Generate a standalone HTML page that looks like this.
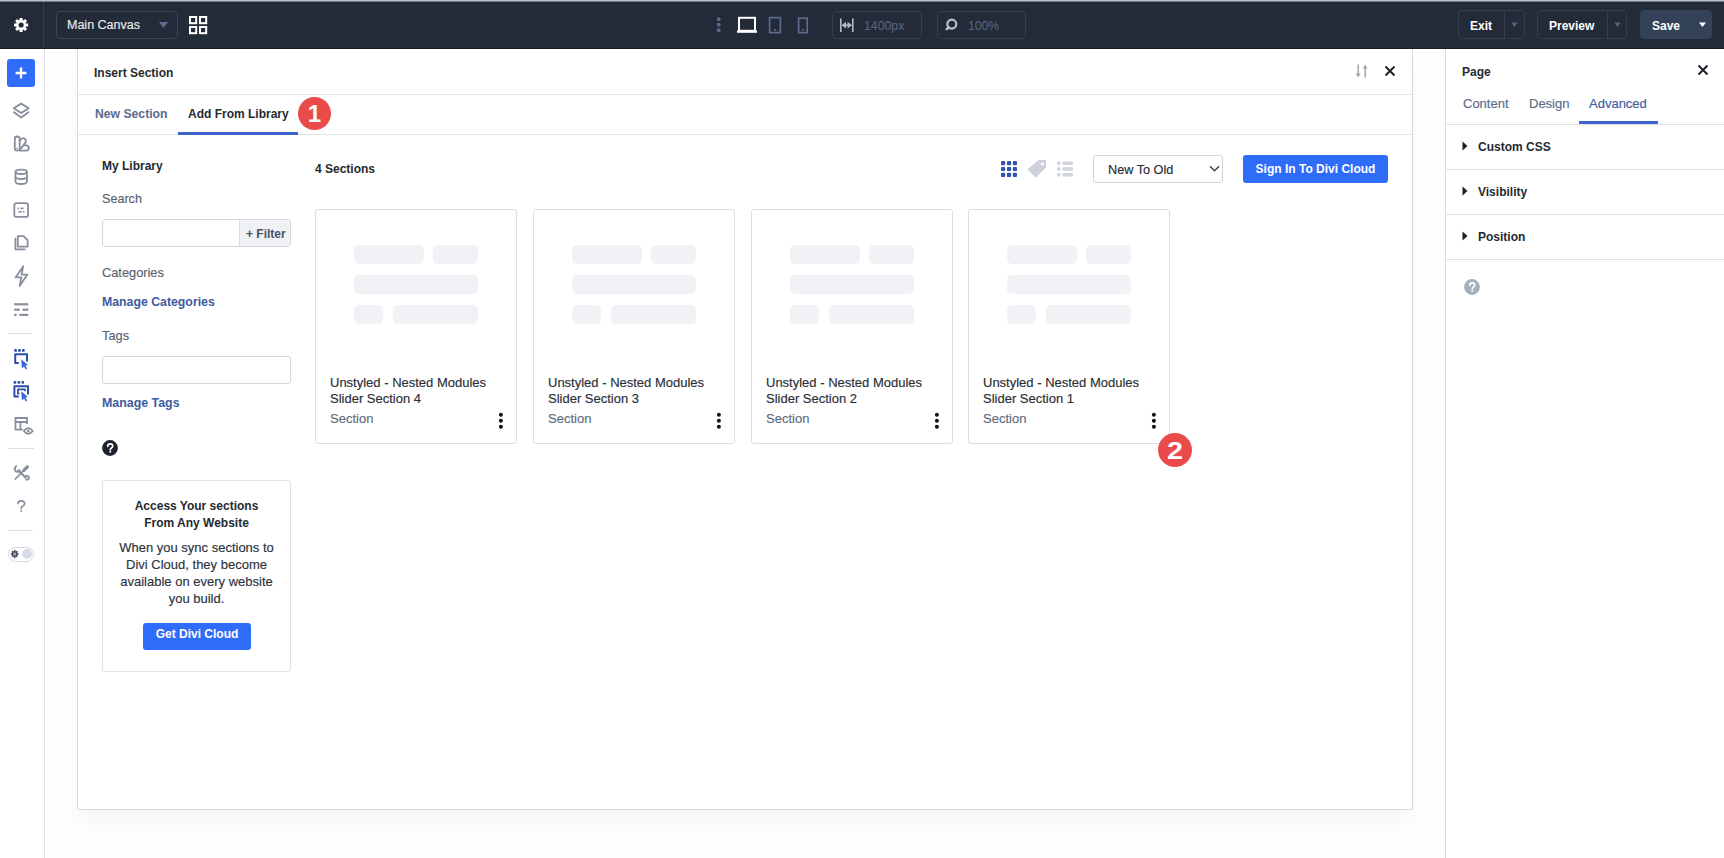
<!DOCTYPE html>
<html><head><meta charset="utf-8">
<style>
*{box-sizing:border-box;margin:0;padding:0}
html,body{width:1724px;height:858px;overflow:hidden;background:#fdfdfe;font-family:"Liberation Sans",sans-serif;color:#1f2937}
.a{position:absolute}
.t{position:absolute;white-space:nowrap;line-height:1}
svg{position:absolute;overflow:visible}
#top{left:0;top:0;width:1724px;height:49px;background:#232a38;border-top:1px solid #b8c1cb;box-shadow:inset 0 1px 0 #6f7885}
.box{position:absolute;border:1px solid #3a4557;border-radius:4px}
.b{font-weight:bold}
.m{-webkit-text-stroke:0.15px currentColor}
</style></head><body>
<!-- TOP BAR -->
<div id="top" class="a"></div>
<div class="a" style="left:43px;top:2px;width:1px;height:46px;background:#343e4c"></div>
<div class="a" style="left:0;top:48px;width:1724px;height:1px;background:#171c25"></div>
<!-- gear -->
<svg style="left:0;top:0" width="44" height="49" viewBox="0 0 44 49">
 <g transform="translate(21.1,25)">
  <path fill="#fff" d="M-1.62,-4.73 L-1.43,-7.06 L1.43,-7.06 L1.62,-4.73 L2.20,-4.49 L3.98,-6.00 L6.00,-3.98 L4.49,-2.20 L4.73,-1.62 L7.06,-1.43 L7.06,1.43 L4.73,1.62 L4.49,2.20 L6.00,3.98 L3.98,6.00 L2.20,4.49 L1.62,4.73 L1.43,7.06 L-1.43,7.06 L-1.62,4.73 L-2.20,4.49 L-3.98,6.00 L-6.00,3.98 L-4.49,2.20 L-4.73,1.62 L-7.06,1.43 L-7.06,-1.43 L-4.73,-1.62 L-4.49,-2.20 L-6.00,-3.98 L-3.98,-6.00 L-2.20,-4.49Z"/>
  <circle r="2.6" fill="#232a38"/>
 </g>
</svg>
<div class="box" style="left:56px;top:11px;width:122px;height:28px"></div>
<div class="t m" style="left:67px;top:19px;font-size:12.5px;color:#e8ebf0">Main Canvas</div>
<svg style="left:159px;top:22px" width="9" height="6"><path d="M0,0 L9,0 L4.5,6 Z" fill="#5d6b8d"/></svg>
<svg style="left:189px;top:16px" width="19" height="19"><g fill="none" stroke="#fff" stroke-width="2"><rect x="1" y="1" width="6.2" height="6.2"/><rect x="11" y="1" width="6.2" height="6.2"/><rect x="1" y="11" width="6.2" height="6.2"/><rect x="11" y="11" width="6.2" height="6.2"/></g></svg>

<!-- center toolbar -->
<svg style="left:714px;top:16px" width="10" height="18"><g fill="#5d6b8d"><circle cx="4.7" cy="3.2" r="1.9"/><circle cx="4.7" cy="8.7" r="1.9"/><circle cx="4.7" cy="14.2" r="1.9"/></g></svg>
<svg style="left:736px;top:16px" width="22" height="18"><g fill="none" stroke="#fff" stroke-width="2"><rect x="3" y="1.8" width="16" height="13"/></g><rect x="1" y="14.5" width="20" height="2.3" fill="#fff"/></svg>
<svg style="left:768px;top:16px" width="14" height="18"><rect x="1.6" y="1.6" width="10.8" height="15" fill="none" stroke="#5d6b8d" stroke-width="1.7"/><rect x="6" y="13" width="2" height="1.6" fill="#5d6b8d"/></svg>
<svg style="left:797px;top:16px" width="12" height="18"><rect x="1.6" y="2.2" width="8.6" height="14.4" fill="none" stroke="#5d6b8d" stroke-width="1.7"/><rect x="5" y="13" width="1.8" height="1.6" fill="#5d6b8d"/></svg>
<div class="box" style="left:832px;top:11px;width:90px;height:28px;border-color:#333e4f"></div>
<svg style="left:839px;top:17px" width="16" height="16"><g fill="#b3bbca"><rect x="1" y="1.4" width="1.6" height="13.6"/><rect x="13" y="1.4" width="1.6" height="13.6"/><path d="M2.6,8.2 L7,4.8 L7,11.6 Z M13,8.2 L8.6,4.8 L8.6,11.6 Z"/><rect x="6" y="7.4" width="3.6" height="1.6"/></g></svg>
<div class="t m" style="left:864px;top:20px;font-size:12.3px;color:#56637f">1400px</div>
<div class="box" style="left:937px;top:11px;width:89px;height:28px;border-color:#333e4f"></div>
<svg style="left:944px;top:17px" width="16" height="16"><circle cx="7.8" cy="7.1" r="4.5" fill="none" stroke="#b9c0d0" stroke-width="2.2"/><path d="M4.6,10.4 L2.8,12.2" stroke="#b9c0d0" stroke-width="2.6" stroke-linecap="round"/></svg>
<div class="t m" style="left:968px;top:20px;font-size:12.2px;color:#56637f">100%</div>

<!-- right buttons -->
<div class="box" style="left:1458px;top:10px;width:67px;height:29px;border-color:#333e4f"></div>
<div class="a" style="left:1504px;top:10px;width:1px;height:29px;background:#333e4f"></div>
<div class="t b" style="left:1470px;top:20px;font-size:12px;color:#fff">Exit</div>
<svg style="left:1510px;top:22px" width="9" height="6"><path d="M1.2,0.6 L7.8,0.6 L4.5,4.9 Z" fill="#56627c"/></svg>
<div class="box" style="left:1537px;top:10px;width:90px;height:29px;border-color:#333e4f"></div>
<div class="a" style="left:1607px;top:10px;width:1px;height:29px;background:#333e4f"></div>
<div class="t b" style="left:1549px;top:20px;font-size:12px;color:#fff">Preview</div>
<svg style="left:1613px;top:22px" width="9" height="6"><path d="M1.2,0.6 L7.8,0.6 L4.5,4.9 Z" fill="#56627c"/></svg>
<div class="a" style="left:1640px;top:10px;width:72px;height:29px;background:#334257;border-radius:4px"></div>
<div class="t b" style="left:1652px;top:20px;font-size:12px;color:#fff">Save</div>
<svg style="left:1698px;top:22px" width="9" height="6"><path d="M1,0.4 L8,0.4 L4.5,5 Z" fill="#fff"/></svg>

<!-- LEFT SIDEBAR -->
<div class="a" style="left:0;top:49px;width:45px;height:809px;background:#fff;border-right:1px solid #dddee3"></div>


<!-- sidebar icons -->
<div class="a" style="left:7px;top:59px;width:28px;height:28px;border-radius:3px;background:#306cfa"></div>
<svg style="left:7px;top:59px" width="28" height="28"><path d="M14,8.6 V19.4 M8.6,14 H19.4" stroke="#fff" stroke-width="2.4"/></svg>
<svg style="left:0;top:95px" width="44" height="240" viewBox="0 95 44 240"><g fill="none" stroke="#898e9f" stroke-width="1.8" stroke-linejoin="round" stroke-linecap="round">
 <path d="M21.2,103.6 L28.6,108.3 L21.2,113 L13.8,108.3 Z" stroke-width="1.9"/>
 <path d="M14,112.2 L21.2,117.6 L28.4,112.2" stroke-width="1.9"/>
 <!-- palette -->
 <rect x="14.8" y="136.5" width="4.9" height="14.2" rx="2.4"/>
 <path d="M19.7,140.8 Q22,137.6 24,138.2 Q26.6,139.4 25.6,142.4 L20.2,149.6"/>
 <path d="M20,150.7 H26.4 Q28.8,150.7 28.8,148.1 Q28.8,145.4 26.2,145.4 H24.4"/>
 <!-- database -->
 <ellipse cx="21.2" cy="171.8" rx="5.7" ry="2.2"/>
 <path d="M15.5,171.8 V181.8 Q15.5,184 21.2,184 Q26.9,184 26.9,181.8 V171.8"/>
 <path d="M15.5,176.8 Q15.5,179 21.2,179 Q26.9,179 26.9,176.8"/>
 <!-- form -->
 <rect x="14.3" y="203.1" width="13.8" height="13.8" rx="2.2"/>
 <!-- pages -->
 <path d="M17.8,246.6 V236.2 H23.6 L27.6,240.2 V246.6 Z"/>
 <path d="M15.4,238.6 V249.4 H24.8"/>
 <!-- lightning -->
 <path d="M23.2,266.2 L15.6,277.4 H21.4 L19.6,286 L27.4,274.6 H21.6 Z"/>
</g>
<g fill="#898e9f">
 <circle cx="17" cy="148.2" r="0.8"/>
 <rect x="17.6" y="207.6" width="1.4" height="1.6"/><rect x="20.4" y="207.6" width="3.2" height="1.6"/>
 <rect x="18.4" y="211" width="3.2" height="1.6"/><rect x="23" y="211" width="1.4" height="1.6"/>
 <rect x="14.2" y="303.2" width="14.1" height="2.2"/>
 <rect x="14.2" y="308.6" width="5.6" height="2.2"/><rect x="22.6" y="308.6" width="5.7" height="2.2"/>
 <rect x="14.2" y="313.8" width="2.4" height="2.2"/><rect x="19.4" y="313.8" width="8.9" height="2.2"/>
</g></svg>
<div class="a" style="left:8px;top:333px;width:24px;height:1px;background:#dddee3"></div>
<svg style="left:0;top:340px" width="44" height="100" viewBox="0 340 44 100">
 <g fill="#2c4ea6">
  <rect x="14.2" y="349.1" width="2.7" height="2.7" rx="0.9"/><rect x="18.1" y="349.1" width="2.7" height="2.7" rx="0.9"/><rect x="22" y="349.1" width="2.7" height="2.7" rx="0.9"/>
  <rect x="13.6" y="381" width="2.7" height="2.7" rx="0.9"/><rect x="17.5" y="381" width="2.7" height="2.7" rx="0.9"/><rect x="21.4" y="381" width="2.7" height="2.7" rx="0.9"/>
 </g>
 <g fill="none" stroke="#2c4ea6" stroke-width="2" stroke-linejoin="round">
  <path d="M18.8,363.1 H15.2 V354.2 H27 V361.6"/>
  <path d="M18.8,396.6 H14.4 V386.3 H28 V394.4"/>
  <path d="M19.4,393.6 H17.9 V389.4 H25 V391.2" stroke-width="1.7"/>
 </g>
 <g fill="#3563e3">
  <path d="M21.2,359.2 L28,365 L25.4,365.6 L27.2,368.6 L25.8,369.4 L24,366.4 L22,368.4 Z"/>
  <path d="M21.2,391.2 L28,397 L25.4,397.6 L27.2,400.6 L25.8,401.4 L24,398.4 L22,400.4 Z"/>
 </g>
 <g fill="none" stroke="#898e9f" stroke-width="1.8">
  <path d="M27,424 V418 H15.5 V429.6 H23"/>
  <path d="M15.5,422 H27 M20.4,422 V429.6"/>
 </g>
 <path d="M22.9,431 Q28.3,423.6 33.7,431 Q28.3,438.4 22.9,431 Z" fill="#fff" stroke="#fff" stroke-width="1.5"/>
 <path d="M23.8,431 Q28.3,425.4 32.8,431 Q28.3,436.6 23.8,431 Z" fill="none" stroke="#898e9f" stroke-width="1.8" stroke-linejoin="round"/>
 <circle cx="28.3" cy="431" r="1.4" fill="#898e9f"/>
</svg>
<div class="a" style="left:8px;top:448px;width:26px;height:1px;background:#dddee3"></div>
<svg style="left:0;top:460px" width="44" height="60" viewBox="0 460 44 60">
 <g stroke="#898e9f" fill="none" stroke-linecap="round">
  <path d="M15.2,479 L23.6,470.6" stroke-width="1.7"/>
  <path d="M23.8,470.4 L27.4,466.8" stroke-width="3.2"/>
  <path d="M18.2,470.2 L25.8,477.8" stroke-width="2"/>
  <path d="M16.2,466.2 Q13.6,468.6 15.6,471.2 Q18.2,472.6 19.8,470.4" stroke-width="1.8"/>
  <path d="M25,476.8 Q27.6,474.8 29,477.4 Q29,480 26.4,479.6" stroke-width="1.8"/>
 </g>
 <path d="M18,503.6 Q18,500.9 21.2,500.9 Q24.6,500.9 24.6,503.6 Q24.6,505.3 22.6,506.2 Q21.2,506.9 21.2,508.4" fill="none" stroke="#898e9f" stroke-width="1.7" stroke-linecap="round"/>
 <circle cx="21.2" cy="511" r="1" fill="#898e9f"/>
</svg>
<div class="a" style="left:8px;top:530px;width:25px;height:1px;background:#dddee3"></div>
<div class="a" style="left:7.5px;top:546.5px;width:26px;height:15px;border:1px solid #d6d8de;border-radius:8px;background:#fff"></div>
<div class="a" style="left:22px;top:549px;width:10px;height:10px;border-radius:50%;background:#d9dce7"></div>
<svg style="left:9px;top:548px" width="12" height="12"><g transform="translate(5.7,6)" fill="#474e62"><path d="M-0.9,-2.6 L-0.8,-3.9 L0.8,-3.9 L0.9,-2.6 L1.2,-2.5 L2.2,-3.3 L3.3,-2.2 L2.5,-1.2 L2.6,-0.9 L3.9,-0.8 L3.9,0.8 L2.6,0.9 L2.5,1.2 L3.3,2.2 L2.2,3.3 L1.2,2.5 L0.9,2.6 L0.8,3.9 L-0.8,3.9 L-0.9,2.6 L-1.2,2.5 L-2.2,3.3 L-3.3,2.2 L-2.5,1.2 L-2.6,0.9 L-3.9,0.8 L-3.9,-0.8 L-2.6,-0.9 L-2.5,-1.2 L-3.3,-2.2 L-2.2,-3.3 L-1.2,-2.5Z"/><circle r="1.5" fill="#a3aac0"/></g></svg>

<!-- MODAL -->
<div class="a" style="left:77px;top:49px;width:1336px;height:761px;background:#fff;border:1px solid #d9dadf;border-top:none;border-radius:0 0 3px 3px;box-shadow:0 14px 18px -6px rgba(30,40,60,0.045)"></div>

<!-- RIGHT PANEL -->
<div class="a" style="left:1445px;top:49px;width:279px;height:809px;background:#fff;border-left:1px solid #dadbe0"></div>


<!-- modal header -->
<div class="t b" style="left:94px;top:67px;font-size:12px;color:#252a31">Insert Section</div>
<svg style="left:1355px;top:64px" width="14" height="14"><g stroke="#a2a6b0" stroke-width="1.5" fill="none"><path d="M3.2,0.5 V12.5"/><path d="M10.2,13.5 V1.5"/></g><g fill="#a2a6b0"><path d="M0.6,9.6 L5.8,9.6 L3.2,13.2 Z"/><path d="M7.6,4.4 L12.8,4.4 L10.2,0.8 Z"/></g></svg>
<svg style="left:1384px;top:65px" width="12" height="12"><path d="M1.5,1.5 L10.5,10.5 M10.5,1.5 L1.5,10.5" stroke="#1a1f29" stroke-width="1.9"/></svg>
<div class="a" style="left:78px;top:94px;width:1334px;height:1px;background:#e2e3e7"></div>
<div class="t b" style="left:95px;top:108px;font-size:12.2px;color:#5a6b8a">New Section</div>
<div class="t b" style="left:188px;top:108px;font-size:12px;color:#252a31">Add From Library</div>
<div class="a" style="left:78px;top:134px;width:1334px;height:1px;background:#e2e3e7"></div>
<div class="a" style="left:178px;top:132px;width:120px;height:3px;background:#3e64cc"></div>
<div class="a" style="left:298px;top:97px;width:33px;height:33px;border-radius:50%;background:#ea4a4a"></div>
<div class="t b" style="left:298px;top:102px;width:33px;text-align:center;font-size:24px;color:#fff">1</div>

<!-- left library panel -->
<div class="t b" style="left:102px;top:160px;font-size:12px;color:#252a31">My Library</div>
<div class="t m" style="left:102px;top:193px;font-size:12.6px;color:#5a6170">Search</div>
<div class="a" style="left:102px;top:219px;width:189px;height:28px;border:1px solid #d6d7dd;border-radius:3px;background:#fff;overflow:hidden"><div class="a" style="left:136px;top:0;width:52px;height:26px;background:#f0f1f5;border-left:1px solid #dddee3"></div></div>
<div class="t b" style="left:246px;top:227.5px;font-size:12px;color:#4a5468">+ Filter</div>
<div class="t m" style="left:102px;top:267px;font-size:12.8px;color:#5a6170">Categories</div>
<div class="t b" style="left:102px;top:295.5px;font-size:12.3px;color:#3d5ba0">Manage Categories</div>
<div class="t m" style="left:102px;top:330px;font-size:12.8px;color:#5a6170">Tags</div>
<div class="a" style="left:102px;top:356px;width:189px;height:28px;border:1px solid #d6d7dd;border-radius:3px;background:#fff"></div>
<div class="t b" style="left:102px;top:397px;font-size:12.4px;color:#3d5ba0">Manage Tags</div>
<svg style="left:102px;top:440px" width="16" height="16"><circle cx="8" cy="8" r="7.9" fill="#1d232b"/><path d="M5.7,6.3 Q5.7,3.9 8.2,3.9 Q10.7,3.9 10.7,6 Q10.7,7.3 9.4,8 Q8.3,8.6 8.3,9.7" fill="none" stroke="#fff" stroke-width="1.7" stroke-linecap="round"/><circle cx="8.3" cy="11.8" r="1.05" fill="#fff"/></svg>
<div class="a" style="left:102px;top:480px;width:189px;height:192px;border:1px solid #e0e1e6;border-radius:3px"></div>
<div class="t b" style="left:102px;top:497.5px;width:189px;text-align:center;font-size:12px;line-height:17px;color:#252a31;white-space:normal">Access Your sections<br>From Any Website</div>
<div class="t m" style="left:102px;top:539px;width:189px;text-align:center;font-size:13px;line-height:17px;color:#2b3340;white-space:normal">When you sync sections to<br>Divi Cloud, they become<br>available on every website<br>you build.</div>
<div class="a" style="left:143px;top:623px;width:108px;height:27px;border-radius:3px;background:#306cfa"></div>
<div class="t b" style="left:143px;top:628px;width:108px;text-align:center;font-size:12px;color:#fff">Get Divi Cloud</div>

<!-- grid header -->
<div class="t b" style="left:315px;top:163px;font-size:12px;color:#252a31">4 Sections</div>
<svg style="left:1000px;top:160px" width="18" height="18"><g fill="#3453ad">
<rect x="1" y="1" width="4.2" height="4.2" rx="1"/><rect x="6.9" y="1" width="4.2" height="4.2" rx="1"/><rect x="12.8" y="1" width="4.2" height="4.2" rx="1"/>
<rect x="1" y="6.9" width="4.2" height="4.2" rx="1"/><rect x="6.9" y="6.9" width="4.2" height="4.2" rx="1"/><rect x="12.8" y="6.9" width="4.2" height="4.2" rx="1"/>
<rect x="1" y="12.8" width="4.2" height="4.2" rx="1"/><rect x="6.9" y="12.8" width="4.2" height="4.2" rx="1"/><rect x="12.8" y="12.8" width="4.2" height="4.2" rx="1"/></g></svg>
<svg style="left:1027px;top:159px" width="20" height="20"><path d="M11.5,1 L18.2,1 Q19,1 19,1.8 L19,8.5 L9.5,18 Q8.8,18.7 8,18 L1.2,11.2 Q0.5,10.5 1.2,9.8 Z" fill="#ccd1dc"/><circle cx="15.3" cy="4.7" r="1.5" fill="#fff"/></svg>
<svg style="left:1056px;top:160px" width="18" height="18"><g fill="#d0d4de"><rect x="1" y="1.5" width="3.6" height="3.6" rx="1.4"/><rect x="1" y="7.2" width="3.6" height="3.6" rx="1.4"/><rect x="1" y="12.9" width="3.6" height="3.6" rx="1.4"/><rect x="6.5" y="1.5" width="10.5" height="3.6" rx="1"/><rect x="6.5" y="7.2" width="10.5" height="3.6" rx="1"/><rect x="6.5" y="12.9" width="10.5" height="3.6" rx="1"/></g></svg>
<div class="a" style="left:1093px;top:155px;width:130px;height:28px;border:1px solid #d4d5db;border-radius:3px;background:#fff"></div>
<div class="t m" style="left:1108px;top:164px;font-size:12.7px;color:#252a31">New To Old</div>
<svg style="left:1209px;top:165px" width="11" height="8"><path d="M1,1.2 L5.5,5.8 L10,1.2" fill="none" stroke="#3a4150" stroke-width="1.4"/></svg>
<div class="a" style="left:1243px;top:155px;width:145px;height:28px;border-radius:3px;background:#306cfa"></div>
<div class="t b" style="left:1243px;top:163px;width:145px;text-align:center;font-size:12px;color:#fff">Sign In To Divi Cloud</div>
<div class="a" style="left:315px;top:209px;width:202px;height:235px;border:1px solid #dddee2;border-radius:3px;background:#fff"></div>
<div class="a" style="left:354px;top:245px;width:70px;height:19px;border-radius:5px;background:#f0f2f5"></div>
<div class="a" style="left:433px;top:245px;width:45px;height:19px;border-radius:5px;background:#f0f2f5"></div>
<div class="a" style="left:354px;top:275px;width:124px;height:19px;border-radius:5px;background:#f0f2f5"></div>
<div class="a" style="left:354px;top:305px;width:29px;height:19px;border-radius:5px;background:#f0f2f5"></div>
<div class="a" style="left:393px;top:305px;width:85px;height:19px;border-radius:5px;background:#f0f2f5"></div>
<div class="t m" style="left:330px;top:374.5px;font-size:13px;line-height:16.3px;color:#2a2e35;white-space:normal">Unstyled - Nested Modules<br>Slider Section 4</div>
<div class="t m" style="left:330px;top:412px;font-size:13px;color:#5f6b80">Section</div>
<svg style="left:497px;top:411px" width="8" height="20"><g fill="#111"><circle cx="3.9" cy="3.8" r="2"/><circle cx="3.9" cy="9.8" r="2"/><circle cx="3.9" cy="15.8" r="2"/></g></svg>
<div class="a" style="left:533px;top:209px;width:202px;height:235px;border:1px solid #dddee2;border-radius:3px;background:#fff"></div>
<div class="a" style="left:572px;top:245px;width:70px;height:19px;border-radius:5px;background:#f0f2f5"></div>
<div class="a" style="left:651px;top:245px;width:45px;height:19px;border-radius:5px;background:#f0f2f5"></div>
<div class="a" style="left:572px;top:275px;width:124px;height:19px;border-radius:5px;background:#f0f2f5"></div>
<div class="a" style="left:572px;top:305px;width:29px;height:19px;border-radius:5px;background:#f0f2f5"></div>
<div class="a" style="left:611px;top:305px;width:85px;height:19px;border-radius:5px;background:#f0f2f5"></div>
<div class="t m" style="left:548px;top:374.5px;font-size:13px;line-height:16.3px;color:#2a2e35;white-space:normal">Unstyled - Nested Modules<br>Slider Section 3</div>
<div class="t m" style="left:548px;top:412px;font-size:13px;color:#5f6b80">Section</div>
<svg style="left:715px;top:411px" width="8" height="20"><g fill="#111"><circle cx="3.9" cy="3.8" r="2"/><circle cx="3.9" cy="9.8" r="2"/><circle cx="3.9" cy="15.8" r="2"/></g></svg>
<div class="a" style="left:751px;top:209px;width:202px;height:235px;border:1px solid #dddee2;border-radius:3px;background:#fff"></div>
<div class="a" style="left:790px;top:245px;width:70px;height:19px;border-radius:5px;background:#f0f2f5"></div>
<div class="a" style="left:869px;top:245px;width:45px;height:19px;border-radius:5px;background:#f0f2f5"></div>
<div class="a" style="left:790px;top:275px;width:124px;height:19px;border-radius:5px;background:#f0f2f5"></div>
<div class="a" style="left:790px;top:305px;width:29px;height:19px;border-radius:5px;background:#f0f2f5"></div>
<div class="a" style="left:829px;top:305px;width:85px;height:19px;border-radius:5px;background:#f0f2f5"></div>
<div class="t m" style="left:766px;top:374.5px;font-size:13px;line-height:16.3px;color:#2a2e35;white-space:normal">Unstyled - Nested Modules<br>Slider Section 2</div>
<div class="t m" style="left:766px;top:412px;font-size:13px;color:#5f6b80">Section</div>
<svg style="left:933px;top:411px" width="8" height="20"><g fill="#111"><circle cx="3.9" cy="3.8" r="2"/><circle cx="3.9" cy="9.8" r="2"/><circle cx="3.9" cy="15.8" r="2"/></g></svg>
<div class="a" style="left:968px;top:209px;width:202px;height:235px;border:1px solid #dddee2;border-radius:3px;background:#fff"></div>
<div class="a" style="left:1007px;top:245px;width:70px;height:19px;border-radius:5px;background:#f0f2f5"></div>
<div class="a" style="left:1086px;top:245px;width:45px;height:19px;border-radius:5px;background:#f0f2f5"></div>
<div class="a" style="left:1007px;top:275px;width:124px;height:19px;border-radius:5px;background:#f0f2f5"></div>
<div class="a" style="left:1007px;top:305px;width:29px;height:19px;border-radius:5px;background:#f0f2f5"></div>
<div class="a" style="left:1046px;top:305px;width:85px;height:19px;border-radius:5px;background:#f0f2f5"></div>
<div class="t m" style="left:983px;top:374.5px;font-size:13px;line-height:16.3px;color:#2a2e35;white-space:normal">Unstyled - Nested Modules<br>Slider Section 1</div>
<div class="t m" style="left:983px;top:412px;font-size:13px;color:#5f6b80">Section</div>
<svg style="left:1150px;top:411px" width="8" height="20"><g fill="#111"><circle cx="3.9" cy="3.8" r="2"/><circle cx="3.9" cy="9.8" r="2"/><circle cx="3.9" cy="15.8" r="2"/></g></svg>
<div class="a" style="left:1158px;top:433px;width:34px;height:34px;border-radius:50%;background:#ea4a4a"></div>
<div class="t b" style="left:1158px;top:440px;width:34px;text-align:center;font-size:23px;color:#fff;transform:scaleX(1.25)">2</div>

<!-- right panel content -->
<div class="t b" style="left:1462px;top:66px;font-size:12px;color:#252a31">Page</div>
<svg style="left:1697px;top:64px" width="12" height="12"><path d="M1.5,1.5 L10.5,10.5 M10.5,1.5 L1.5,10.5" stroke="#1a1f29" stroke-width="1.9"/></svg>
<div class="t m" style="left:1463px;top:97px;font-size:13px;color:#5a6b8a">Content</div>
<div class="t m" style="left:1529px;top:97px;font-size:13px;color:#5a6b8a">Design</div>
<div class="t m" style="left:1589px;top:97px;font-size:13px;color:#3d5ba0">Advanced</div>
<div class="a" style="left:1446px;top:124px;width:278px;height:1px;background:#e0e1e6"></div>
<div class="a" style="left:1579px;top:121px;width:79px;height:3px;background:#3e64cc"></div>
<svg style="left:1462px;top:141px" width="6" height="10"><path d="M0.5,0.5 L5.5,5 L0.5,9.5 Z" fill="#1a1f29"/></svg>
<div class="t b" style="left:1478px;top:141px;font-size:12px;color:#252a31">Custom CSS</div>
<div class="a" style="left:1446px;top:169px;width:278px;height:1px;background:#e0e1e6"></div>
<svg style="left:1462px;top:186px" width="6" height="10"><path d="M0.5,0.5 L5.5,5 L0.5,9.5 Z" fill="#1a1f29"/></svg>
<div class="t b" style="left:1478px;top:186px;font-size:12px;color:#252a31">Visibility</div>
<div class="a" style="left:1446px;top:214px;width:278px;height:1px;background:#e0e1e6"></div>
<svg style="left:1462px;top:231px" width="6" height="10"><path d="M0.5,0.5 L5.5,5 L0.5,9.5 Z" fill="#1a1f29"/></svg>
<div class="t b" style="left:1478px;top:231px;font-size:12px;color:#252a31">Position</div>
<div class="a" style="left:1446px;top:259px;width:278px;height:1px;background:#e0e1e6"></div>
<svg style="left:1464px;top:278.5px" width="16" height="16"><circle cx="8" cy="8" r="7.9" fill="#a7aec0"/><path d="M5.7,6.3 Q5.7,3.9 8.2,3.9 Q10.7,3.9 10.7,6 Q10.7,7.3 9.4,8 Q8.3,8.6 8.3,9.7" fill="none" stroke="#fff" stroke-width="1.7" stroke-linecap="round"/><circle cx="8.3" cy="11.8" r="1.05" fill="#fff"/></svg>
</body></html>
